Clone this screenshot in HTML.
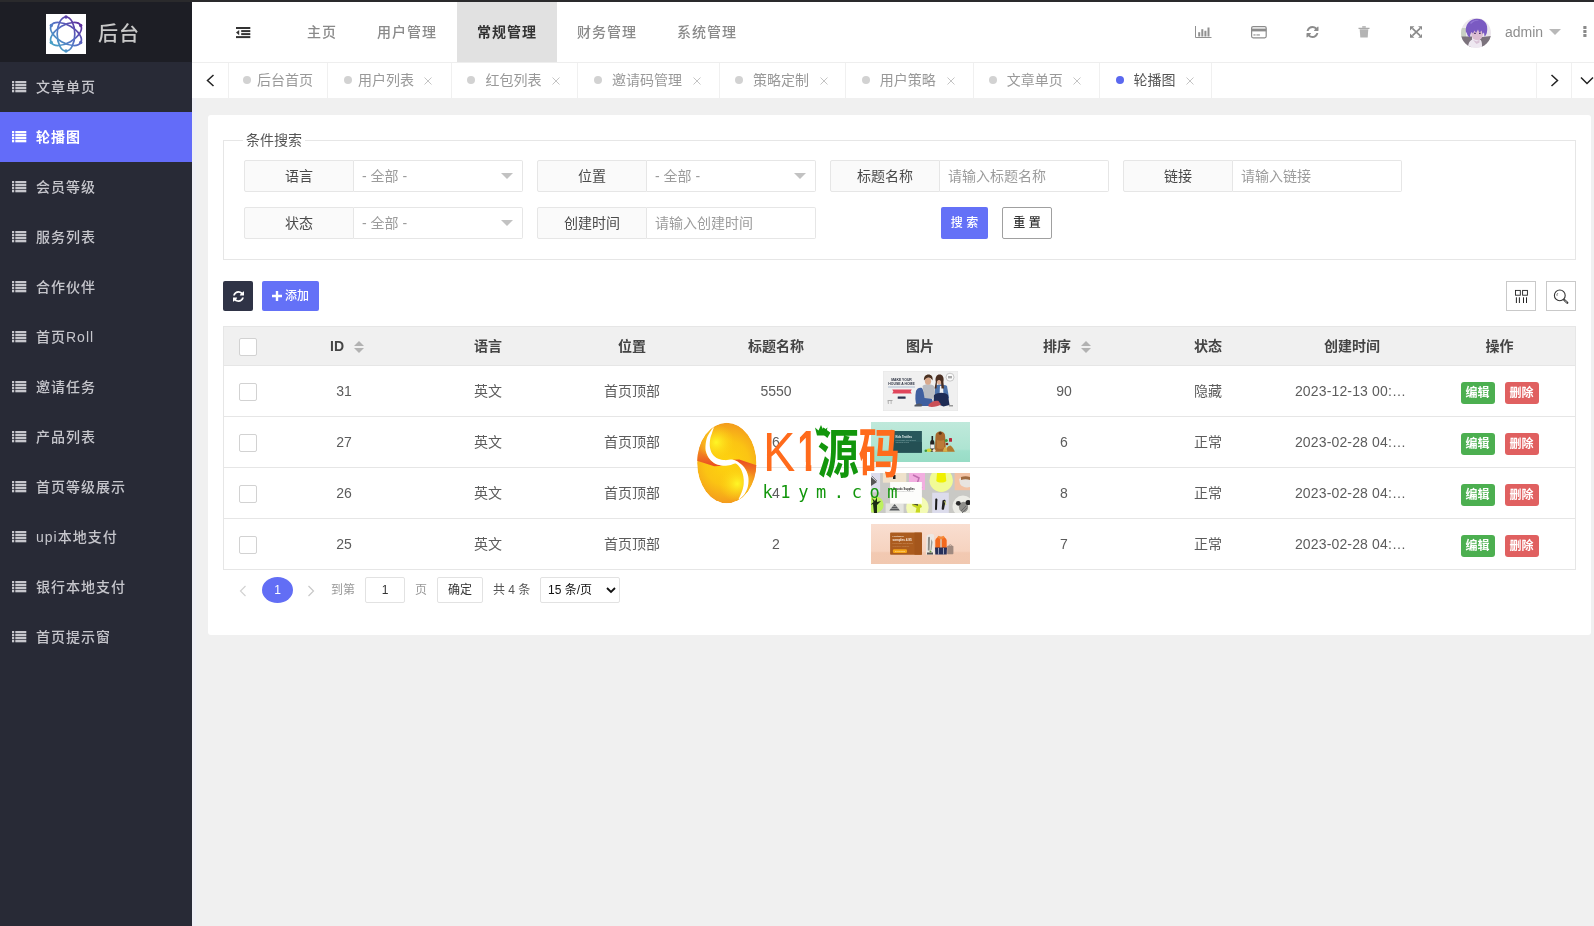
<!DOCTYPE html>
<html lang="zh-CN">
<head>
<meta charset="utf-8">
<title>后台</title>
<style>
*{box-sizing:border-box;margin:0;padding:0}
html,body{width:1594px;height:926px;overflow:hidden}
body{position:relative;will-change:transform;background:#f0f0f0;font-family:"Liberation Sans","Noto Sans CJK SC",sans-serif;font-size:14px;color:#666}
.abs{position:absolute}
i{font-style:normal}
#topline{left:0;top:0;width:1594px;height:2px;background:#2a2a2c}
/* sidebar */
#side{left:0;top:2px;width:192px;height:924px;background:#282a36}
#logo{left:0;top:0;width:192px;height:60px;background:#1d1e25}
#logo .img{left:46px;top:12px;width:40px;height:40px;background:#fff}
#logo h1{position:absolute;left:98px;top:2px;height:60px;line-height:60px;font-size:20px;letter-spacing:1px;font-weight:500;color:#c8c8c8}
#menu{left:0;top:60px;width:192px}
#menu .it{position:relative;height:50px;line-height:50px;color:#c6c6cc;font-weight:500;font-size:14px;letter-spacing:1px;padding-left:36px;white-space:nowrap}
#menu .it.on{background:#636cf9;color:#fff;font-weight:700}
#menu .it svg{position:absolute;left:12px;top:19px}
/* header */
#head{left:192px;top:2px;width:1402px;height:61px;background:#fff;border-bottom:1px solid #eee}
#nav .n{position:absolute;top:0;height:60px;line-height:60px;text-align:center;font-size:14px;letter-spacing:1px;color:#8a8a8a;font-weight:500;white-space:nowrap}
#nav .n.on{background:#e1e1e1;color:#333;font-weight:700}
/* tabs */
#tabs{left:192px;top:63px;width:1402px;height:35px;background:#fff}
#tabs .t{position:absolute;top:0;height:35px;line-height:34px;font-size:14px;color:#999;border-right:1px solid #f0f0f0;white-space:nowrap}
#tabs .t .dot{position:absolute;top:13px;width:8px;height:8px;border-radius:50%;background:#d2d2d2}
#tabs .t.on{color:#555}
#tabs .t.on .dot{background:#5a68ef}
#tabs .t .tx{position:absolute;top:0}
#tabs .t svg{position:absolute;top:14px}
#tabs .ctl{position:absolute;top:0;height:35px}
/* card */
#card{left:208px;top:114px;width:1383px;height:521px;background:#fff;border-radius:3px}
#card{top:115px;height:520px}
.fs{left:15px;top:17px;width:1353px;height:128px;border:1px solid #e6e6e6;padding:0}
.fs legend{margin-left:19px;padding:0 3px 0 3px;font-size:14px;line-height:16px;color:#555}
.fs legend span{position:relative;top:0;left:0}
.fg{width:279px;height:32px;display:flex}
.fg label{width:110px;height:32px;line-height:30px;text-align:center;background:#fafafa;border:1px solid #e6e6e6;border-radius:2px 0 0 2px;color:#4a4a4a;font-size:14px}
.fg .sel,.fg .inp{position:relative;flex:1;height:32px;line-height:30px;border:1px solid #e6e6e6;border-left:0;border-radius:0 2px 2px 0;padding-left:8px;color:#9c9c9c;font-size:14px;background:#fff}
.fg .tri{position:absolute;right:9px;top:12px;width:0;height:0;border:6px solid transparent;border-top:6px solid #c2c2c2;border-bottom:0}
.btn-s,.btn-r{width:47px;height:32px;line-height:32px;text-align:center;font-size:12px;font-weight:500;border-radius:2px}
.btn-s{background:#6471f7;color:#fff}
.btn-r{width:50px;background:#fff;border:1px solid #a0a0a0;color:#333;line-height:30px}
.tb-ref{left:15px;top:166px;width:30px;height:30px;background:#2f3346;border-radius:2px}
.tb-ref svg{position:absolute;left:9.5px;top:9.5px}
.tb-add{left:54px;top:166px;width:57px;height:30px;background:#6471f7;border-radius:2px;color:#fff;font-size:12px;font-weight:500;line-height:30px}
.tb-add svg{position:absolute;left:10px;top:10px}
.tb-add span{position:absolute;left:23px;top:0}
.tb-ico{top:166px;width:30px;height:30px;border:1px solid #c9c9c9;background:#fff}
.tb-ico svg{position:absolute;left:0;top:0}
.tbl{left:15px;top:211px;width:1353px;border:1px solid #e6e6e6;border-bottom:0}
.tbl .th,.tbl .tr{display:flex;border-bottom:1px solid #e6e6e6}
.tbl .th{height:39px;background:#f0f0f0;font-weight:700;color:#444}
.tbl .tr{height:51px}
.tbl .c{width:144px;text-align:center;white-space:nowrap;position:relative;font-size:14px}
.tbl .th .c{line-height:38px}
.tbl .tr .c{line-height:50px;color:#5c5c5c}
.tbl .c0{width:48px}
.tbl .c9{width:151px}
.cb{position:absolute;left:15px;width:18px;height:18px;border:1px solid #d2d2d2;border-radius:2px;background:#fff}
.th .cb{top:11px}.tr .cb{top:17px}
.sort{position:relative;display:inline-block;width:10px;height:12px;margin-left:10px;vertical-align:-2px}
.tbl .th .c.st{padding-left:6px}
.tbl .tr .c.dt{letter-spacing:.15px;padding-right:3px}
.sort i{position:absolute;left:0;width:0;height:0;border:5px solid transparent}
.sort .up{top:-5px;border-bottom:5px solid #b2b2b2}
.sort .dn{top:7px;border-top:5px solid #b2b2b2}
.ed,.de{display:inline-block;width:34px;height:22px;line-height:22px;border-radius:3px;color:#fff;font-size:12px;font-weight:700;vertical-align:middle;margin-top:1px}
.ed{background:#4caf50;margin-right:10px}
.de{background:#e06060}
.pg{left:0;top:462px;width:700px;height:26px;font-size:12px}
.pg .cur{left:54px;top:0;width:31px;height:26px;line-height:26px;border-radius:50%;background:#626ef5;color:#fff;text-align:center}
.pg .lt{top:0;line-height:26px}
.pg .box{top:0;height:26px;line-height:24px;border:1px solid #e2e2e2;border-radius:2px;text-align:center;color:#333;background:#fff}
.pg .sl{text-align:left;padding-left:7px;color:#111;font-size:12px}
.pg .sl svg{position:absolute;right:3px;top:9px}
.tbl .im{display:block;margin:5px auto 0}
#strip{left:192px;top:98px;width:4px;height:828px;background:#eeeff4}

</style>
</head>
<body>
<div id="topline" class="abs"></div>
<div id="side" class="abs">
  <div id="logo" class="abs">
    <div class="img abs"><svg width="40" height="40" viewBox="0 0 40 40"><defs><linearGradient id="lg" gradientUnits="userSpaceOnUse" x1="6" y1="34" x2="34" y2="6"><stop offset="0" stop-color="#45a9c6"/><stop offset=".5" stop-color="#5670c4"/><stop offset="1" stop-color="#5f2596"/></linearGradient></defs>
<g fill="none" stroke="url(#lg)" stroke-width="1.700"><path d="M20 3A17 8.800 90 1 0 20 37A17 8.800 90 1 0 20 3z"/><path d="M34.720 28.500A17 8.800 30 1 0 5.280 11.500A17 8.800 30 1 0 34.720 28.500z"/><path d="M5.280 28.500A17 8.800 150 1 0 34.720 11.500A17 8.800 150 1 0 5.280 28.500z"/></g>
<g fill="url(#lg)"><circle cx="20" cy="3" r="1.700"/><circle cx="34.700" cy="11.500" r="1.700"/><circle cx="34.700" cy="28.500" r="1.700"/><circle cx="20" cy="37" r="1.700"/><circle cx="5.300" cy="28.500" r="1.700"/><circle cx="5.300" cy="11.500" r="1.700"/></g></svg>
</div>
    <h1>后台</h1>
  </div>
  <div id="menu" class="abs">
<div class="it"><svg width="15" height="12" viewBox="0 0 15 12"><g fill="currentColor"><rect x="0" y="0" width="2.200" height="2.300"/><rect x="3.300" y="0" width="11" height="2.300"/><rect x="0" y="3" width="2.200" height="2.300"/><rect x="3.300" y="3" width="11" height="2.300"/><rect x="0" y="6" width="2.200" height="2.300"/><rect x="3.300" y="6" width="11" height="2.300"/><rect x="0" y="9" width="2.200" height="2.300"/><rect x="3.300" y="9" width="11" height="2.300"/></g></svg><span>文章单页</span></div>
<div class="it on"><svg width="15" height="12" viewBox="0 0 15 12"><g fill="currentColor"><rect x="0" y="0" width="2.200" height="2.300"/><rect x="3.300" y="0" width="11" height="2.300"/><rect x="0" y="3" width="2.200" height="2.300"/><rect x="3.300" y="3" width="11" height="2.300"/><rect x="0" y="6" width="2.200" height="2.300"/><rect x="3.300" y="6" width="11" height="2.300"/><rect x="0" y="9" width="2.200" height="2.300"/><rect x="3.300" y="9" width="11" height="2.300"/></g></svg><span>轮播图</span></div>
<div class="it"><svg width="15" height="12" viewBox="0 0 15 12"><g fill="currentColor"><rect x="0" y="0" width="2.200" height="2.300"/><rect x="3.300" y="0" width="11" height="2.300"/><rect x="0" y="3" width="2.200" height="2.300"/><rect x="3.300" y="3" width="11" height="2.300"/><rect x="0" y="6" width="2.200" height="2.300"/><rect x="3.300" y="6" width="11" height="2.300"/><rect x="0" y="9" width="2.200" height="2.300"/><rect x="3.300" y="9" width="11" height="2.300"/></g></svg><span>会员等级</span></div>
<div class="it"><svg width="15" height="12" viewBox="0 0 15 12"><g fill="currentColor"><rect x="0" y="0" width="2.200" height="2.300"/><rect x="3.300" y="0" width="11" height="2.300"/><rect x="0" y="3" width="2.200" height="2.300"/><rect x="3.300" y="3" width="11" height="2.300"/><rect x="0" y="6" width="2.200" height="2.300"/><rect x="3.300" y="6" width="11" height="2.300"/><rect x="0" y="9" width="2.200" height="2.300"/><rect x="3.300" y="9" width="11" height="2.300"/></g></svg><span>服务列表</span></div>
<div class="it"><svg width="15" height="12" viewBox="0 0 15 12"><g fill="currentColor"><rect x="0" y="0" width="2.200" height="2.300"/><rect x="3.300" y="0" width="11" height="2.300"/><rect x="0" y="3" width="2.200" height="2.300"/><rect x="3.300" y="3" width="11" height="2.300"/><rect x="0" y="6" width="2.200" height="2.300"/><rect x="3.300" y="6" width="11" height="2.300"/><rect x="0" y="9" width="2.200" height="2.300"/><rect x="3.300" y="9" width="11" height="2.300"/></g></svg><span>合作伙伴</span></div>
<div class="it"><svg width="15" height="12" viewBox="0 0 15 12"><g fill="currentColor"><rect x="0" y="0" width="2.200" height="2.300"/><rect x="3.300" y="0" width="11" height="2.300"/><rect x="0" y="3" width="2.200" height="2.300"/><rect x="3.300" y="3" width="11" height="2.300"/><rect x="0" y="6" width="2.200" height="2.300"/><rect x="3.300" y="6" width="11" height="2.300"/><rect x="0" y="9" width="2.200" height="2.300"/><rect x="3.300" y="9" width="11" height="2.300"/></g></svg><span>首页Roll</span></div>
<div class="it"><svg width="15" height="12" viewBox="0 0 15 12"><g fill="currentColor"><rect x="0" y="0" width="2.200" height="2.300"/><rect x="3.300" y="0" width="11" height="2.300"/><rect x="0" y="3" width="2.200" height="2.300"/><rect x="3.300" y="3" width="11" height="2.300"/><rect x="0" y="6" width="2.200" height="2.300"/><rect x="3.300" y="6" width="11" height="2.300"/><rect x="0" y="9" width="2.200" height="2.300"/><rect x="3.300" y="9" width="11" height="2.300"/></g></svg><span>邀请任务</span></div>
<div class="it"><svg width="15" height="12" viewBox="0 0 15 12"><g fill="currentColor"><rect x="0" y="0" width="2.200" height="2.300"/><rect x="3.300" y="0" width="11" height="2.300"/><rect x="0" y="3" width="2.200" height="2.300"/><rect x="3.300" y="3" width="11" height="2.300"/><rect x="0" y="6" width="2.200" height="2.300"/><rect x="3.300" y="6" width="11" height="2.300"/><rect x="0" y="9" width="2.200" height="2.300"/><rect x="3.300" y="9" width="11" height="2.300"/></g></svg><span>产品列表</span></div>
<div class="it"><svg width="15" height="12" viewBox="0 0 15 12"><g fill="currentColor"><rect x="0" y="0" width="2.200" height="2.300"/><rect x="3.300" y="0" width="11" height="2.300"/><rect x="0" y="3" width="2.200" height="2.300"/><rect x="3.300" y="3" width="11" height="2.300"/><rect x="0" y="6" width="2.200" height="2.300"/><rect x="3.300" y="6" width="11" height="2.300"/><rect x="0" y="9" width="2.200" height="2.300"/><rect x="3.300" y="9" width="11" height="2.300"/></g></svg><span>首页等级展示</span></div>
<div class="it"><svg width="15" height="12" viewBox="0 0 15 12"><g fill="currentColor"><rect x="0" y="0" width="2.200" height="2.300"/><rect x="3.300" y="0" width="11" height="2.300"/><rect x="0" y="3" width="2.200" height="2.300"/><rect x="3.300" y="3" width="11" height="2.300"/><rect x="0" y="6" width="2.200" height="2.300"/><rect x="3.300" y="6" width="11" height="2.300"/><rect x="0" y="9" width="2.200" height="2.300"/><rect x="3.300" y="9" width="11" height="2.300"/></g></svg><span>upi本地支付</span></div>
<div class="it"><svg width="15" height="12" viewBox="0 0 15 12"><g fill="currentColor"><rect x="0" y="0" width="2.200" height="2.300"/><rect x="3.300" y="0" width="11" height="2.300"/><rect x="0" y="3" width="2.200" height="2.300"/><rect x="3.300" y="3" width="11" height="2.300"/><rect x="0" y="6" width="2.200" height="2.300"/><rect x="3.300" y="6" width="11" height="2.300"/><rect x="0" y="9" width="2.200" height="2.300"/><rect x="3.300" y="9" width="11" height="2.300"/></g></svg><span>银行本地支付</span></div>
<div class="it"><svg width="15" height="12" viewBox="0 0 15 12"><g fill="currentColor"><rect x="0" y="0" width="2.200" height="2.300"/><rect x="3.300" y="0" width="11" height="2.300"/><rect x="0" y="3" width="2.200" height="2.300"/><rect x="3.300" y="3" width="11" height="2.300"/><rect x="0" y="6" width="2.200" height="2.300"/><rect x="3.300" y="6" width="11" height="2.300"/><rect x="0" y="9" width="2.200" height="2.300"/><rect x="3.300" y="9" width="11" height="2.300"/></g></svg><span>首页提示窗</span></div>

  </div>
</div>
<div id="head" class="abs">
  <div id="nav">
<div class="n" style="left:95px;width:70px">主页</div>
<div class="n" style="left:165px;width:100px">用户管理</div>
<div class="n on" style="left:265px;width:100px">常规管理</div>
<div class="n" style="left:365px;width:100px">财务管理</div>
<div class="n" style="left:465px;width:100px">系统管理</div>

  </div>
<svg class="abs" style="left:44px;top:25px" width="15" height="12" viewBox="0 0 15 12" fill="#333"><rect x="0" y="0" width="14.3" height="2"/><rect x="5.2" y="3.1" width="9.1" height="2"/><rect x="5.2" y="6.1" width="9.1" height="2"/><rect x="0" y="9.1" width="14.3" height="2"/><path d="M0 5.6L3.2 3v5.2z"/></svg>
<svg class="abs" style="left:1003px;top:24px" width="17" height="13" viewBox="0 0 17 13"><path d="M0.5 0v11.5H16.5" fill="none" stroke="#909090" stroke-width="1"/><g fill="#909090"><rect x="3.2" y="6.2" width="2" height="4.3"/><rect x="6.3" y="3.2" width="2" height="7.3"/><rect x="9.4" y="4.8" width="2" height="5.7"/><rect x="12.5" y="1.5" width="2" height="9"/></g></svg>
<svg class="abs" style="left:1059px;top:24px" width="16" height="13" viewBox="0 0 16 13"><rect x="0.6" y="0.6" width="14.6" height="11.2" rx="1.5" fill="none" stroke="#8c8c8c" stroke-width="1.2"/><rect x="0.6" y="2.6" width="14.6" height="2.8" fill="#8c8c8c"/><rect x="2.4" y="8.4" width="2.2" height="1.1" fill="#8c8c8c"/><rect x="5.4" y="8.4" width="3.5" height="1.1" fill="#8c8c8c"/></svg>
<svg class="abs" style="left:1114px;top:24px" width="13" height="12" viewBox="0 0 1536 1536"><path fill="#8c8c8c" d="M1511 928q0 5-1 7-64 268-268 434.500T764 1536q-146 0-282.500-55T238 1324l-129 129q-19 19-45 19t-45-19-19-45V960q0-26 19-45t45-19h448q26 0 45 19t19 45-19 45l-137 137q71 66 161 102t187 36q134 0 250-65t186-179q11-17 53-117 8-23 30-23h192q13 0 22.500 9.500T1511 928zm25-800v448q0 26-19 45t-45 19h-448q-26 0-45-19t-19-45 19-45l138-138Q969 256 768 256q-134 0-250 65T332 500q-11 17-53 117-8 23-30 23H50q-13 0-22.500-9.500T18 608v-7q65-268 270-434.500T768 0q146 0 284 55.500T1297 212l130-129q19-19 45-19t45 19 19 45z"/></svg>
<svg class="abs" style="left:1166px;top:24px" width="12" height="12" viewBox="0 0 12 12"><path d="M4.2 0.8h3.6M0.5 2.3h11" stroke="#aaa" stroke-width="1.2" fill="none"/><path d="M1.7 3.3h8.6l-.6 8.2H2.3z" fill="#b4b4b4"/></svg>
<svg class="abs" style="left:1217.500px;top:24px" width="12.500" height="12" viewBox="0 0 13 12"><path d="M2.5 2.2L10.5 9.8M10.5 2.2L2.5 9.8" stroke="#8a8a8a" stroke-width="1.8" fill="none"/><path d="M0 0h4.6L0 4.4zM13 0H8.4L13 4.4zM0 12h4.6L0 7.6zM13 12H8.4L13 7.6z" fill="#8a8a8a"/></svg>
<svg class="abs" style="left:1269px;top:16px" width="30" height="30" viewBox="0 0 30 30"><defs><clipPath id="av"><circle cx="15" cy="15" r="15"/></clipPath></defs><g clip-path="url(#av)"><rect width="30" height="30" fill="#ebe6ec"/><path d="M0 10h5v9H0z" fill="#c9d0c4"/><path d="M0 18.500h11v11.500H0zM17 19.500l13-1.500v12H21z" fill="#7b727c"/><path d="M7 30c0-6 3-9.500 8.500-9.500S21 24 21 30z" fill="#eee8f1"/><path d="M12 22l4 1.500 2.500-2v3l-3 1.500z" fill="#d9c2d6"/><ellipse cx="16.200" cy="15.500" rx="6" ry="6.800" fill="#dcbdd2"/><path d="M13 15.200l1.800.3M18 15.500l1.800-.3" stroke="#3a2a5a" stroke-width="1"/><path d="M5 15C3.500 6.500 9 .8 16 .8S27.500 5.500 26 14c-.5 2.500-1.500 4-2.500 4.500l-.5-4-1.500 1.500-1-3.500-2 2.500-1.500-3.500-2 3.500-1.500-2.500-1.500 3-1.500-1.500c-1 1.500-1.500 3.500-1.500 5.500-1.500-.5-3-2.500-3.500-5.500z" fill="#7a5ac2"/><path d="M9 5c2-2.500 6-3.500 9-2.500-3 0-6 1-8 3.500z" fill="#9478d4"/></g></svg>
<span class="abs" style="left:1313px;top:0;line-height:60px;font-size:14px;color:#8e8e8e">admin</span>
<i class="abs" style="left:1357px;top:27px;width:0;height:0;border:6px solid transparent;border-top:6px solid #b8b8b8;border-bottom:0"></i>
<svg class="abs" style="left:1391px;top:24px" width="4" height="12" viewBox="0 0 4 12" fill="#8a8a8a"><rect x="0.3" y="0" width="3.2" height="3" rx=".6"/><rect x="0.3" y="4" width="3.2" height="3" rx=".6"/><rect x="0.3" y="8" width="3.2" height="3" rx=".6"/></svg>

</div>
<div id="tabs" class="abs">
<div class="t" style="left:36px;width:100px"><i class="dot" style="left:15.0px"></i><span class="tx" style="left:29.0px">后台首页</span></div>
<div class="t" style="left:136px;width:124px"><i class="dot" style="left:16.0px"></i><span class="tx" style="left:30.0px">用户列表</span><svg width="8" height="8" viewBox="0 0 8 8" style="left:96.4px"><path d="M0.5 0.5 L7.5 7.5 M7.5 0.5 L0.5 7.5" stroke="#c4c4c4" stroke-width="1" fill="none"/></svg></div>
<div class="t" style="left:260px;width:126px"><i class="dot" style="left:15.0px"></i><span class="tx" style="left:33.6px">红包列表</span><svg width="8" height="8" viewBox="0 0 8 8" style="left:99.9px"><path d="M0.5 0.5 L7.5 7.5 M7.5 0.5 L0.5 7.5" stroke="#c4c4c4" stroke-width="1" fill="none"/></svg></div>
<div class="t" style="left:386px;width:142px"><i class="dot" style="left:16.3px"></i><span class="tx" style="left:34.0px">邀请码管理</span><svg width="8" height="8" viewBox="0 0 8 8" style="left:114.6px"><path d="M0.5 0.5 L7.5 7.5 M7.5 0.5 L0.5 7.5" stroke="#c4c4c4" stroke-width="1" fill="none"/></svg></div>
<div class="t" style="left:528px;width:126px"><i class="dot" style="left:15.3px"></i><span class="tx" style="left:33.0px">策略定制</span><svg width="8" height="8" viewBox="0 0 8 8" style="left:99.9px"><path d="M0.5 0.5 L7.5 7.5 M7.5 0.5 L0.5 7.5" stroke="#c4c4c4" stroke-width="1" fill="none"/></svg></div>
<div class="t" style="left:654px;width:128px"><i class="dot" style="left:16.0px"></i><span class="tx" style="left:33.8px">用户策略</span><svg width="8" height="8" viewBox="0 0 8 8" style="left:100.6px"><path d="M0.5 0.5 L7.5 7.5 M7.5 0.5 L0.5 7.5" stroke="#c4c4c4" stroke-width="1" fill="none"/></svg></div>
<div class="t" style="left:782px;width:126px"><i class="dot" style="left:15.0px"></i><span class="tx" style="left:32.8px">文章单页</span><svg width="8" height="8" viewBox="0 0 8 8" style="left:99.0px"><path d="M0.5 0.5 L7.5 7.5 M7.5 0.5 L0.5 7.5" stroke="#c4c4c4" stroke-width="1" fill="none"/></svg></div>
<div class="t on" style="left:908px;width:112px"><i class="dot" style="left:16.0px"></i><span class="tx" style="left:33.4px">轮播图</span><svg width="8" height="8" viewBox="0 0 8 8" style="left:86.0px"><path d="M0.5 0.5 L7.5 7.5 M7.5 0.5 L0.5 7.5" stroke="#c4c4c4" stroke-width="1" fill="none"/></svg></div>

<div class="ctl" style="left:0;width:37px;border-right:1px solid #f0f0f0"><svg class="abs" style="left:14px;top:11px" width="9" height="13" viewBox="0 0 9 13"><path d="M7.5 1L1.5 6.5l6 5.5" fill="none" stroke="#222" stroke-width="1.5"/></svg></div>
<div class="ctl" style="left:1344px;width:36px;border-left:1px solid #f0f0f0;border-right:1px solid #f0f0f0"><svg class="abs" style="left:13px;top:11px" width="9" height="13" viewBox="0 0 9 13"><path d="M1.5 1l6 5.5-6 5.5" fill="none" stroke="#222" stroke-width="1.5"/></svg></div>
<div class="ctl" style="left:1380px;width:22px"><svg class="abs" style="left:8px;top:13px" width="14" height="9" viewBox="0 0 14 9"><path d="M1 1.5l6 6 6-6" fill="none" stroke="#222" stroke-width="1.5"/></svg></div>
</div>
<div id="strip" class="abs"></div>
<div id="card" class="abs">
<fieldset class="fs abs"><legend><span>条件搜索</span></legend></fieldset>
<div class="fg abs" style="left:36px;top:45px"><label>语言</label><div class="sel">- 全部 -<i class="tri"></i></div></div>
<div class="fg abs" style="left:329px;top:45px"><label>位置</label><div class="sel">- 全部 -<i class="tri"></i></div></div>
<div class="fg abs" style="left:622px;top:45px"><label>标题名称</label><div class="inp">请输入标题名称</div></div>
<div class="fg abs" style="left:915px;top:45px"><label>链接</label><div class="inp">请输入链接</div></div>
<div class="fg abs" style="left:36px;top:92px"><label>状态</label><div class="sel">- 全部 -<i class="tri"></i></div></div>
<div class="fg abs" style="left:329px;top:92px"><label>创建时间</label><div class="inp">请输入创建时间</div></div>
<div class="btn-s abs" style="left:733px;top:92px">搜 索</div>
<div class="btn-r abs" style="left:794px;top:92px">重 置</div>

<div class="tb-ref abs"><svg width="11" height="11" viewBox="0 0 1536 1536"><path fill="#fff" d="M1511 928q0 5-1 7-64 268-268 434.500T764 1536q-146 0-282.500-55T238 1324l-129 129q-19 19-45 19t-45-19-19-45V960q0-26 19-45t45-19h448q26 0 45 19t19 45-19 45l-137 137q71 66 161 102t187 36q134 0 250-65t186-179q11-17 53-117 8-23 30-23h192q13 0 22.500 9.500T1511 928zm25-800v448q0 26-19 45t-45 19h-448q-26 0-45-19t-19-45 19-45l138-138Q969 256 768 256q-134 0-250 65T332 500q-11 17-53 117-8 23-30 23H50q-13 0-22.500-9.500T18 608v-7q65-268 270-434.500T768 0q146 0 284 55.500T1297 212l130-129q19-19 45-19t45 19 19 45z"/></svg></div>
<div class="tb-add abs"><svg width="10" height="10" viewBox="0 0 10 10"><path d="M3.8 0h2.4v3.8H10v2.4H6.2V10H3.8V6.2H0V3.8h3.8z" fill="#fff"/></svg><span>添加</span></div>
<div class="tb-ico abs" style="left:1298px"><svg width="28" height="28" viewBox="1 1 28 28" fill="none" stroke="#222"><rect x="9.500" y="9.400" width="4.800" height="4.800" stroke-width=".9"/><rect x="16.600" y="9.400" width="4.800" height="4.800" stroke-width=".9"/><path d="M10.400 16.300v5.700M13.400 16.300v5.700M17.500 16.300v5.700M20.500 16.300v5.700" stroke-width="1"/></svg></div>
<div class="tb-ico abs" style="left:1338px"><svg width="28" height="28" viewBox="1 1 28 28" fill="none" stroke="#333"><circle cx="13.800" cy="14.400" r="5.400" stroke-width="1.1"/><path d="M11 14.800a2.800 2.800 0 0 1 .8-2.600" stroke-width=".7"/><path d="M18.300 19l3 2.800" stroke-width="2.200" stroke-linecap="round"/><path d="M18.500 19.200l2.600 2.400" stroke="#fff" stroke-width=".7"/></svg></div>

<div class="tbl abs">
  <div class="th">
    <div class="c c0"><i class="cb"></i></div>
    <div class="c st">ID<span class="sort"><i class="up"></i><i class="dn"></i></span></div>
    <div class="c">语言</div><div class="c">位置</div><div class="c">标题名称</div><div class="c">图片</div>
    <div class="c st">排序<span class="sort"><i class="up"></i><i class="dn"></i></span></div>
    <div class="c">状态</div><div class="c">创建时间</div><div class="c c9">操作</div>
  </div>
  <div class="tr">
    <div class="c c0"><i class="cb"></i></div><div class="c">31</div><div class="c">英文</div><div class="c">首页顶部</div><div class="c">5550</div>
    <div class="c"><svg class="im" width="75" height="40" viewBox="0 0 75 40" style="font-family:'Liberation Sans',sans-serif"><rect width="75" height="40" fill="#f0f0f0"/><rect x="0" y="0" width="75" height="40" fill="none" stroke="#e6e6e6" stroke-width="1"/>
<text x="18.5" y="10" font-size="3.4" font-weight="700" fill="#2a3040" text-anchor="middle">MAKE YOUR</text><text x="18.5" y="13.8" font-size="3.4" font-weight="700" fill="#2a3040" text-anchor="middle">HOUSE A HOME</text>
<rect x="5" y="15.400" width="27" height="1.200" fill="#b8c6d6"/><path d="M9.200 18.500h19.600l-1.200 2 1.200 2.100H9.200l1.200-2.100z" fill="#e0465c"/><rect x="14.700" y="25.400" width="7.900" height="2.400" rx=".4" fill="#2b3350"/>
<path d="M4.500 29h5v1h-1v3h-.8v-3h-2v3h-.8z" fill="#aaa"/>
<circle cx="67" cy="6.200" r="4" fill="#fafafa" stroke="#bbb" stroke-width=".8"/><rect x="65" y="5" width="4" height="2.400" fill="#aaa"/>
<path d="M33 20c1-3 4-4 6-3l3 6 7 5 2 7H34c-2-4-2-10-1-15z" fill="#3f5fa0"/>
<path d="M39.500 15c2-2.500 9-2.500 11.500 0l1.500 9-3 4-8-1z" fill="#b9bcc2"/>
<path d="M31.500 34c3-2 6-2 8 0l-1 1.500h-7z" fill="#555a66"/>
<ellipse cx="45" cy="10.200" rx="3.100" ry="3.600" fill="#d9a98c"/><path d="M41 9.500c-.5-4 2-6 4.500-6s4.800 2 4 6c-1-2-2.500-3-4-3s-3 1-4.500 3z" fill="#4a3020"/>
<path d="M52 15c2-2 9-2 12 0l2 12-4 3-10-2z" fill="#4c72aa"/><path d="M57 15h3l.5 9h-4z" fill="#f2f2f4"/>
<path d="M51 24c4-3 11-3 14 0l1.500 10-6 1.500-10-4z" fill="#1f2c55"/>
<ellipse cx="56.500" cy="10" rx="2.800" ry="3.400" fill="#dcae94"/><path d="M52.800 11c-1-5 1-7.500 3.800-7.500s4.800 2.500 3.800 7.500l.6 6.500h-2.500l-.5-7c-1-2-3-2-4 0l-.5 7h-2z" fill="#4b2f22"/>
<path d="M45.500 33.500c3-3 7-4.500 10-3.500l2.500 3.500c-3 2-9 3-12.500 2z" fill="#c94f57"/>
<rect x="66" y="34" width="4" height="1.500" fill="#999"/></svg></div><div class="c">90</div><div class="c">隐藏</div><div class="c dt">2023-12-13 00:…</div>
    <div class="c c9"><b class="ed">编辑</b><b class="de">删除</b></div>
  </div>
  <div class="tr">
    <div class="c c0"><i class="cb"></i></div><div class="c">27</div><div class="c">英文</div><div class="c">首页顶部</div><div class="c">6</div>
    <div class="c"><svg class="im" width="99" height="40" viewBox="0 0 99 40" style="font-family:'Liberation Sans',sans-serif"><defs><linearGradient id="g2" x1="0" y1="0" x2="0" y2="1"><stop offset="0" stop-color="#bfe9db"/><stop offset=".68" stop-color="#aee4d2"/><stop offset=".72" stop-color="#9fe0cb"/><stop offset="1" stop-color="#98dcc6"/></linearGradient></defs><rect width="99" height="40" fill="url(#g2)"/>
<rect x="19.500" y="9" width="31.400" height="21.700" fill="#28585c"/><rect x="19.500" y="20" width="31.400" height="10.700" fill="#245054"/>
<text x="24.500" y="15.600" font-size="2.700" font-weight="700" fill="#e8f4f2">Kids Textiles</text><text x="24.500" y="19" font-size="1.700" fill="#8fb4b4">Lorem ipsum dolor sit amet</text><text x="24.500" y="21.200" font-size="1.700" fill="#8fb4b4">adipiscing elit sed</text>
<path d="M60.500 14h1.600v4c1 .8 1.300 1.600 1.300 3v8.700h-4.200V21c0-1.400.3-2.200 1.300-3z" fill="#222"/><rect x="59.400" y="22.500" width="3.800" height="4" fill="#eee"/>
<path d="M64.500 14c0-3 2-4.500 4.800-4.500s4.800 1.500 4.800 4.500l1 15.700H63.800z" fill="#a8672c"/><ellipse cx="69.200" cy="11.200" rx="1.500" ry="1.600" fill="#5a3414"/><path d="M66 18c2 1 5 1 7 0v8c-2 1.200-5 1.200-7 0z" fill="#bb7a38"/>
<circle cx="75.300" cy="18.500" r="1.500" fill="#3e9a3c"/><rect x="78" y="16" width="3" height="3.800" rx=".6" fill="#b8283a"/><circle cx="76" cy="22" r="1.300" fill="#7a2a20"/>
<path d="M74.500 29.700c.5-3.500 3-6.500 5-6.200 2 1.500 3.500 4 4.300 6.200z" fill="#b27b2e"/><path d="M72 29.700c0-2.500 1.500-5 3-5.500l1.500 5.500z" fill="#d9b04a"/>
<ellipse cx="58" cy="28.300" rx="2.800" ry="1.800" fill="#d4d83a"/><circle cx="54.800" cy="28.800" r="1.300" fill="#3e9a3c"/><ellipse cx="63" cy="28.500" rx="1.600" ry="1.500" fill="#f0e0c8"/></svg></div><div class="c">6</div><div class="c">正常</div><div class="c dt">2023-02-28 04:…</div>
    <div class="c c9"><b class="ed">编辑</b><b class="de">删除</b></div>
  </div>
  <div class="tr">
    <div class="c c0"><i class="cb"></i></div><div class="c">26</div><div class="c">英文</div><div class="c">首页顶部</div><div class="c">4</div>
    <div class="c"><svg class="im" width="99" height="40" viewBox="0 0 99 40" style="font-family:'Liberation Sans',sans-serif"><rect width="99" height="40" fill="#c9c9c5"/>
<rect x="0" y="0" width="9.100" height="19.300" fill="#dcdcec"/><path d="M0 4l6 5-6 4z" fill="#555"/><path d="M1 3l5 5" stroke="#888" stroke-width="1"/>
<rect x="11.900" y="0" width="23.400" height="9.700" fill="#efe2cc"/><rect x="22" y="2" width="2.500" height="4" fill="#222"/>
<rect x="38" y="0" width="16" height="17" fill="#f2aee0"/><path d="M42 2l6 3-2 6 5 4" stroke="#c070b0" stroke-width="1.500" fill="none"/>
<circle cx="70.200" cy="7.200" r="11.700" fill="#f1fb96"/><path d="M66 0h8.500l.8 8c-2 2-8 2-10 0z" fill="#f0f000"/>
<rect x="83.600" y="0" width="15.400" height="17.200" fill="#f2c2a4"/><path d="M88 6c3-2 8-2 11-1v9c-4 1-8 0-10-3z" fill="#e8e4e0"/><path d="M90 4c3-1 6-1 9 0v3c-3-1-6-1-9 0z" fill="#a06a40"/>
<circle cx="4.300" cy="31.700" r="8.300" fill="#bdf15e"/><path d="M3 40l-1-9-3 1 3.500-3-1.500-4 3 3 2-4v5l4-1-4 4v8z" fill="#1c2a14"/>
<rect x="14.600" y="30.400" width="18" height="9.600" fill="#e4e4e0"/><path d="M18.300 37.500l5.300-6.500 5.300 6.500z" fill="#55585a"/><path d="M20 35.500h7M21.500 33.500h4" stroke="#c8c8c8" stroke-width=".5"/>
<circle cx="46.400" cy="34.500" r="11.200" fill="#f4fbb4"/><path d="M41 31l9 .5 1 2.500-2 1v4.500h-4.500l1-4.500-4-2z" fill="#c8d820"/><path d="M41 31l6 .3v1.500z" fill="#333"/>
<rect x="61.200" y="19.700" width="16.600" height="20.300" fill="#dcdcec"/><path d="M64.300 26c1.500-1 2.500 0 2 2l-.3 8c0 1.500-2 1.500-2 0z" fill="#1a1a1a"/><path d="M71.500 27.500c1.500-1.500 3.500-1 3 1l-1.500 7.500c-.5 1.500-2.500 1-2.300-.5z" fill="#222"/><path d="M73.500 28l1.500 4" stroke="#d8e060" stroke-width=".8"/>
<circle cx="92" cy="33.100" r="10.500" fill="#ecece6"/><ellipse cx="92.500" cy="34" rx="4.600" ry="5.200" fill="#8e8e8a"/><circle cx="87.300" cy="30.300" r="2.400" fill="#2a2a2a"/><circle cx="97.200" cy="29.500" r="2.600" fill="#222"/><path d="M90 38l5-5M91 40l5-5" stroke="#666" stroke-width=".9"/>
<rect x="19.100" y="9" width="31.800" height="21.700" fill="#fdfdfb"/>
<text x="22" y="16.500" font-size="2.700" font-weight="700" fill="#222">Aquatic Supplies</text><text x="22" y="19.300" font-size="1.500" fill="#aaa">Lorem ipsum dolor sit amet elit</text></svg></div><div class="c">8</div><div class="c">正常</div><div class="c dt">2023-02-28 04:…</div>
    <div class="c c9"><b class="ed">编辑</b><b class="de">删除</b></div>
  </div>
  <div class="tr">
    <div class="c c0"><i class="cb"></i></div><div class="c">25</div><div class="c">英文</div><div class="c">首页顶部</div><div class="c">2</div>
    <div class="c"><svg class="im" width="99" height="40" viewBox="0 0 99 40" style="font-family:'Liberation Sans',sans-serif"><defs><linearGradient id="g4" x1="0" y1="0" x2="0" y2="1"><stop offset="0" stop-color="#f9ded0"/><stop offset=".68" stop-color="#f6d3c0"/><stop offset=".72" stop-color="#f2c9b2"/><stop offset="1" stop-color="#f1c8b0"/></linearGradient></defs><rect width="99" height="40" fill="url(#g4)"/>
<rect x="19.100" y="8.600" width="31.800" height="22.100" rx=".8" fill="#ab5c1f"/><rect x="43.500" y="8.600" width="7.400" height="22.100" fill="#a4561c"/>
<text x="21.500" y="12.800" font-size="2.500" font-weight="700" fill="#f6e4d2">Footwear</text><text x="21.500" y="16.600" font-size="3.100" font-weight="700" fill="#fbeee2">samples 4.95</text>
<text x="21.500" y="20.400" font-size="1.700" fill="#d6a070">Lorem ipsum dolor sit amet</text><text x="21.500" y="22.500" font-size="1.700" fill="#c89060">consectetur adipiscing</text>
<rect x="21.900" y="25.200" width="14.100" height="3.800" rx="1.200" fill="#f5a418"/><text x="24" y="28" font-size="1.800" font-weight="700" fill="#fbe2a0">SHOP NOW</text>
<path d="M55.500 12c1-2 6-3 7.500-1l.8 19.500H55z" fill="#ece8e4"/><path d="M57 13.500c.8-1 1.600-1 2 0l-.4 13h-1.800z" fill="#8a8a86"/><path d="M60.300 15l1.200 3-1 8h-1z" fill="#9a9a96"/><path d="M56 28.500h6v2h-6z" fill="#555"/><circle cx="59.500" cy="27.500" r="1" fill="#6a9a40"/>
<path d="M64.300 16c1-2.500 3-3.500 5.700-3.500s4.700 1 5.700 3.500v9H64.300z" fill="#f2691e"/><path d="M69.300 12.500h1.400v12.500h-1.400z" fill="#d8d0c0"/><path d="M66 13.500l1.500-1.800 2.500 1.300 2.500-1.300 1.500 1.800-4 2z" fill="#f58a3a"/>
<path d="M64 23.500h12l-.3 7H64.300z" fill="#27305a"/><path d="M67 24h.8v6.500H67zM72.200 24h.8v6.500h-.8z" fill="#b8b8c8"/>
<rect x="76.200" y="21.800" width="6.200" height="8.500" rx=".8" fill="#a08a80"/><path d="M78 21.800c0-1.500 2.600-1.500 2.600 0" stroke="#80706a" stroke-width=".6" fill="none"/></svg></div><div class="c">7</div><div class="c">正常</div><div class="c dt">2023-02-28 04:…</div>
    <div class="c c9"><b class="ed">编辑</b><b class="de">删除</b></div>
  </div>
</div>

<div class="pg abs">
  <svg class="abs" style="left:31px;top:8px" width="8" height="12" viewBox="0 0 8 12"><path d="M6.5 1L1.5 6l5 5" fill="none" stroke="#d2d2d2" stroke-width="1.2"/></svg>
  <span class="cur abs">1</span>
  <svg class="abs" style="left:99px;top:8px" width="8" height="12" viewBox="0 0 8 12"><path d="M1.5 1l5 5-5 5" fill="none" stroke="#c8c8c8" stroke-width="1.2"/></svg>
  <span class="abs lt" style="left:123px;color:#999">到第</span>
  <span class="abs box" style="left:157px;width:40px">1</span>
  <span class="abs lt" style="left:207px;color:#999">页</span>
  <span class="abs box" style="left:229px;width:46px;color:#333">确定</span>
  <span class="abs lt" style="left:285px;color:#555">共 4 条</span>
  <span class="abs box sl" style="left:332px;width:80px">15 条/页<svg width="10" height="7" viewBox="0 0 10 7"><path d="M1 1l4 4 4-4" fill="none" stroke="#111" stroke-width="1.8"/></svg></span>
</div>

</div>
<svg class="abs" style="left:690px;top:415px" width="220" height="95" viewBox="690 415 220 95">
<defs>
<radialGradient id="wg" cx="0.42" cy="0.3" r="0.75"><stop offset="0" stop-color="#fff01a"/><stop offset=".45" stop-color="#fccb12"/><stop offset="1" stop-color="#f29a1c"/></radialGradient>
<linearGradient id="wo" x1="0" y1="0" x2="1" y2="1"><stop offset="0" stop-color="#f7a21a"/><stop offset=".5" stop-color="#ea5a1e"/><stop offset="1" stop-color="#f59a1c"/></linearGradient>
</defs>
<defs><clipPath id="c1"><path d="M795 425H815V462H811.300V475H805.800V462H795z"/></clipPath><clipPath id="wc"><ellipse cx="378" cy="462" rx="305" ry="414"/></clipPath>
<linearGradient id="wl" gradientUnits="userSpaceOnUse" x1="0" y1="90" x2="0" y2="500"><stop offset="0" stop-color="#f8b01c"/><stop offset=".55" stop-color="#f49320"/><stop offset="1" stop-color="#ea4a22"/></linearGradient>
<linearGradient id="wr" gradientUnits="userSpaceOnUse" x1="0" y1="832" x2="0" y2="425"><stop offset="0" stop-color="#f8b01c"/><stop offset=".55" stop-color="#f49320"/><stop offset="1" stop-color="#ea4a22"/></linearGradient>
<radialGradient id="wh" cx=".5" cy=".5" r=".5"><stop offset="0" stop-color="#fff626"/><stop offset="1" stop-color="#fdd312" stop-opacity="0"/></radialGradient>
<radialGradient id="wb" gradientUnits="userSpaceOnUse" cx="378" cy="462" r="420"><stop offset="0" stop-color="#fdd40e"/><stop offset=".55" stop-color="#fbc413"/><stop offset="1" stop-color="#f39a1e"/></radialGradient></defs>
<g transform="translate(690 418) scale(.09728)" clip-path="url(#wc)">
<ellipse cx="378" cy="462" rx="305" ry="414" fill="url(#wb)"/>
<path d="M250 88C244 95 228 111 215 130C202 149 184 175 175 200C166 225 162 255 160 280C158 305 158 327 165 350C172 373 184 400 200 420C216 440 237 458 260 470C283 482 327 487 340 490L250 497L80 442L-20 442L-20 60L250 60z" fill="url(#wl)"/>
<path d="M440 428C449 432 472 436 492 450C512 464 540 485 558 510C576 535 592 568 598 600C604 632 602 670 596 700C590 730 576 758 562 780C548 802 519 823 510 832L510 870L780 870L780 482L676 482L506 427z" fill="url(#wr)"/>
<circle cx="270" cy="250" r="190" fill="url(#wh)"/><circle cx="486" cy="676" r="190" fill="url(#wh)"/>
<path d="M250 88C244 95 228 111 215 130C202 149 184 175 175 200C166 225 162 255 160 280C158 305 158 327 165 350C172 373 184 400 200 420C216 440 237 458 260 470C283 482 313 488 340 490C367 492 398 486 420 482C442 478 453 462 470 468C487 474 507 498 520 520C533 542 543 573 548 600C553 627 555 653 552 680C549 707 541 735 532 760C523 785 505 820 500 832L510 832C519 823 548 802 562 780C576 758 590 730 596 700C602 670 604 632 598 600C592 568 576 535 558 510C540 485 512 464 492 450C472 436 462 431 440 428C418 425 385 434 360 433C335 432 312 430 290 420C268 410 244 390 230 370C216 350 209 325 205 300C201 275 203 245 207 220C211 195 221 172 228 150C235 128 246 98 250 88z" fill="#fff"/>
</g>
<g style="font-family:'Liberation Sans',sans-serif;font-size:55px" fill="#ff6b1c"><text transform="translate(763 470.500) scale(.88 1)">K</text><g clip-path="url(#c1)"><text transform="translate(797.500 470.500) scale(.66 1.07)" style="font-family:'Liberation Sans',sans-serif;font-weight:700;font-size:54px">1</text></g></g>
<g style="font-family:'Noto Sans CJK SC',sans-serif;font-weight:700;font-size:53px"><text transform="translate(817.500 472.500) scale(.78 1)" fill="#12960c">源</text><text transform="translate(858.500 472.500) scale(.78 1)" fill="#ff6b1c">码</text></g>
<path d="M815 427.500l3.500 3 2.500-5.500 2.500 5.500 4-3-2 8h-8.500z" fill="#12960c"/>
<text x="762.500" y="497.500" style="font-family:'DejaVu Sans Mono',monospace;font-size:17px;letter-spacing:7.6px" fill="#12960c">k1ym.com</text>
</svg>

</body>
</html>
